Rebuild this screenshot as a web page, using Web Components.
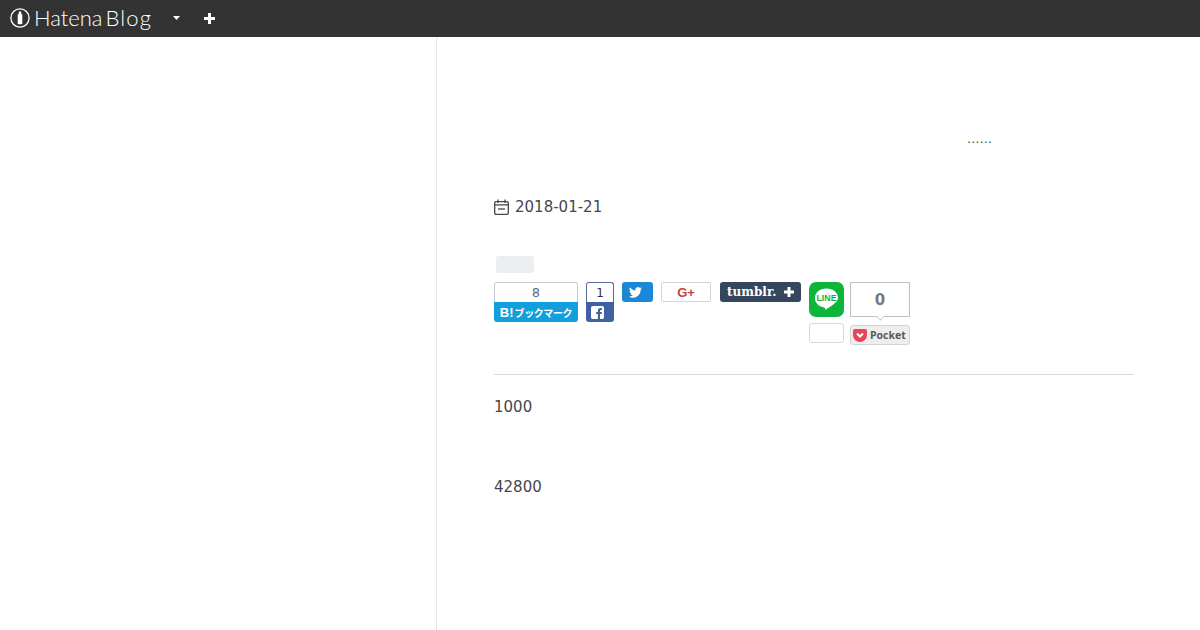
<!DOCTYPE html>
<html>
<head>
<meta charset="utf-8">
<title>Hatena Blog</title>
<style>
  html, body { margin: 0; padding: 0; background: #fff; }
  body { font-family: "DejaVu Sans", sans-serif; color: #45474c; height: 630px; overflow: hidden; }
</style>
</head>
<body>
<blog-navbar></blog-navbar>
<blog-layout>
  <blog-dots></blog-dots>
  <blog-date date="2018-01-21"></blog-date>
  <blog-tag></blog-tag>
  <share-bar></share-bar>
  <blog-para top="20">1000</blog-para>
  <blog-para top="55">42800</blog-para>
</blog-layout>

<script>
class BlogNavbar extends HTMLElement {
    constructor() {
        super();
        this.attachShadow({ mode: 'open' });
        this.shadowRoot.innerHTML = `
            <style>
                :host {
                    display: flex;
                    align-items: center;
                    box-sizing: border-box;
                    height: 37px;
                    padding: 0 0 1px 10px;
                    background: #333;
                    color: #fff;
                }
                svg { display: block; flex: none; }
                .logo-text {
                    font-family: "Lato", sans-serif;
                    font-weight: 300;
                    font-size: 22px;
                    line-height: 24px;
                    margin-left: 4px;
                    width: 118px;
                    word-spacing: -3px;
                    white-space: nowrap;
                }
                .logo-text span { letter-spacing: 1.2px; }
                .caret { margin-left: 21px; }
                .plus { margin-left: 24px; }
            </style>
            <svg width="20" height="20" viewBox="0 0 20 20">
                <circle cx="10" cy="10" r="9.1" fill="none" stroke="#fff" stroke-width="1.3"/>
                <path d="M8.900 3.600h2.200v1.600l1.200 1.600v8.600a.8.8 0 0 1-.8.8H8.500a.8.8 0 0 1-.8-.8V6.800l1.200-1.600z" fill="#fff"/>
            </svg>
            <div class="logo-text">Hatena <span>Blog</span></div>
            <svg class="caret" width="7" height="4" viewBox="0 0 7 4"><path d="M0 0h7L3.500 4z" fill="#fff"/></svg>
            <svg class="plus" width="11" height="11" viewBox="0 0 11 11"><path d="M4 0h3v4h4v3H7v4H4V7H0V4h4z" fill="#fff"/></svg>
        `;
    }
}

class BlogLayout extends HTMLElement {
    constructor() {
        super();
        this.attachShadow({ mode: 'open' });
        this.shadowRoot.innerHTML = `
            <style>
                :host {
                    display: grid;
                    grid-template-columns: 437px 1fr;
                    height: 593px;
                }
                .side { border-right: 1px solid #e5e5e5; }
                .main { padding: 0 66px 0 57px; }
            </style>
            <div class="side"></div>
            <div class="main"><slot></slot></div>
        `;
    }
}

class BlogDots extends HTMLElement {
    constructor() {
        super();
        this.attachShadow({ mode: 'open' });
        this.shadowRoot.innerHTML = `
            <style>
                :host {
                    display: block;
                    padding: 93px 0 0 473px;
                    font-size: 12.5px;
                    line-height: 17px;
                }
            </style>
            ……
        `;
    }
}

class BlogDate extends HTMLElement {
    constructor() {
        super();
        this.attachShadow({ mode: 'open' });
        this.shadowRoot.innerHTML = `
            <style>
                :host {
                    display: flex;
                    align-items: center;
                    gap: 6px;
                    margin-top: 49px;
                    height: 22px;
                    font-size: 15px;
                }
            </style>
            <svg width="15" height="16" viewBox="0 0 15 16" fill="none" stroke="#45474c" stroke-width="1.300">
                <rect x="0.700" y="2.700" width="13.600" height="12.600" rx="1.200"/>
                <path d="M4 0.500v3.500M11 0.500v3.500M0.700 5.800h13.600"/>
                <path d="M4 10h7"/>
            </svg>
            <span>${this.getAttribute('date')}</span>
        `;
    }
}

class BlogTag extends HTMLElement {
    constructor() {
        super();
        this.attachShadow({ mode: 'open' });
        this.shadowRoot.innerHTML = `
            <style>
                :host {
                    display: block;
                    width: 38px;
                    height: 17px;
                    margin: 38px 0 9px 2px;
                    background: #eceef1;
                    border-radius: 3px;
                }
            </style>
        `;
    }
}

class ShareBar extends HTMLElement {
    constructor() {
        super();
        this.attachShadow({ mode: 'open' });
        this.shadowRoot.innerHTML = `
            <style>
                :host {
                    display: flex;
                    align-items: flex-start;
                    height: 93px;
                    box-sizing: border-box;
                    border-bottom: 1px solid #d8d8d8;
                    font-family: "Liberation Sans", sans-serif;
                }
                .count {
                    box-sizing: border-box;
                    border: 1px solid #c5ccd3;
                    border-bottom: 0;
                    background: #fff;
                    border-radius: 3px 3px 0 0;
                    height: 20px;
                    display: flex;
                    align-items: center;
                    justify-content: center;
                    font-family: "DejaVu Sans", sans-serif;
                    font-size: 13px;
                }
                .hatena { width: 84px; margin-right: 8px; }
                .hatena .count { color: #5a6c7e; }
                .hatena .label {
                    height: 20px;
                    background: #139fdb;
                    color: #fff;
                    border-radius: 0 0 3px 3px;
                    font: bold 10px "Noto Sans CJK JP", sans-serif;
                    letter-spacing: -0.4px;
                    display: flex;
                    align-items: center;
                    justify-content: center;
                    white-space: nowrap;
                }
                .hatena b { font: bold 13px "Liberation Sans", sans-serif; letter-spacing: 0; margin-right: 1px; }
                .fb { width: 28px; margin-right: 8px; }
                .fb .count { border-color: #5a6b94; color: #333; font-size: 12px; }
                .fb .label {
                    height: 20px;
                    box-sizing: border-box;
                    padding-left: 5px;
                    background: #4060a5;
                    border-radius: 0 0 3px 3px;
                    display: flex;
                    align-items: center;
                }
                .tw {
                    box-sizing: border-box;
                    width: 31px;
                    height: 20px;
                    padding-left: 7px;
                    background: #1b87d6;
                    border-radius: 3px;
                    margin-right: 8px;
                    display: flex;
                    align-items: center;
                }
                .gp {
                    box-sizing: border-box;
                    width: 50px;
                    height: 20px;
                    border: 1px solid #d5d5d5;
                    border-radius: 2px;
                    background: #fff;
                    margin-right: 9px;
                    color: #c5453a;
                    font: bold 13px "Liberation Sans", sans-serif;
                    display: flex;
                    align-items: center;
                    justify-content: center;
                }
                .tb {
                    width: 81px;
                    height: 20px;
                    background: #36465d;
                    border-radius: 3px;
                    margin-right: 8px;
                    color: #fff;
                    font: bold 12px "DejaVu Serif", serif;
                    display: flex;
                    align-items: center;
                    justify-content: space-between;
                    padding: 0 7px;
                    box-sizing: border-box;
                }
                .line { width: 35px; margin-right: 6px; }
                .line .icon {
                    width: 35px;
                    height: 35px;
                    background: #0db63a;
                    border-radius: 7px;
                    display: flex;
                    align-items: center;
                    justify-content: center;
                }
                .line .box {
                    box-sizing: border-box;
                    width: 35px;
                    height: 20px;
                    margin-top: 6px;
                    border: 1px solid #d8d8d8;
                    border-radius: 3px;
                    background: #fff;
                }
                .pocket { width: 60px; }
                .pocket .num {
                    position: relative;
                    box-sizing: border-box;
                    height: 35px;
                    border: 1px solid #c0c0c0;
                    background: #fff;
                    color: #77797c;
                    font: bold 15px "DejaVu Sans", sans-serif;
                    display: flex;
                    align-items: center;
                    justify-content: center;
                }
                .pocket .num::after {
                    content: '';
                    position: absolute;
                    left: 26px;
                    bottom: -4px;
                    width: 6px;
                    height: 6px;
                    background: #fff;
                    border-right: 1px solid #c0c0c0;
                    border-bottom: 1px solid #c0c0c0;
                    transform: rotate(45deg) scale(.8);
                }
                .pocket .btn {
                    box-sizing: border-box;
                    height: 20px;
                    margin-top: 8px;
                    border: 1px solid #d4d4d4;
                    border-radius: 3px;
                    background: #eee;
                    color: #55585c;
                    font: bold 10.5px/16px "Open Sans", sans-serif;
                    display: flex;
                    align-items: center;
                    gap: 3px;
                    padding: 0 0 1px 2px;
                    white-space: nowrap;
                }
            </style>
            <div class="hatena">
                <div class="count">8</div>
                <div class="label"><b>B!</b>ブックマーク</div>
            </div>
            <div class="fb">
                <div class="count">1</div>
                <div class="label">
                    <svg width="13" height="13" viewBox="0 0 14 14"><path fill="#fff" fill-rule="evenodd" d="M2 0h10a2 2 0 0 1 2 2v10a2 2 0 0 1-2 2H9.700V8.600h1.800l.3-2.100H9.700V5.200c0-.6.200-1 1-1h1.100V2.300c-.2 0-.9-.1-1.600-.1-1.700 0-2.800 1-2.800 2.800v1.500H5.600v2.100h1.800V14H2a2 2 0 0 1-2-2V2a2 2 0 0 1 2-2z"/></svg>
                </div>
            </div>
            <div class="tw">
                <svg width="13" height="11" viewBox="0 0 24 20"><path fill="#fff" d="M24 2.400a9.800 9.800 0 0 1-2.800.8A4.900 4.900 0 0 0 23.300.5a9.800 9.800 0 0 1-3.100 1.200 4.900 4.900 0 0 0-8.400 4.500A14 14 0 0 1 1.700.9a4.900 4.900 0 0 0 1.500 6.600 4.900 4.900 0 0 1-2.200-.6v.1a4.900 4.900 0 0 0 3.900 4.800 4.900 4.900 0 0 1-2.200.1 4.900 4.900 0 0 0 4.600 3.400A9.900 9.900 0 0 1 0 17.300 14 14 0 0 0 7.500 19.500c9.100 0 14-7.500 14-14v-.6A10 10 0 0 0 24 2.400z"/></svg>
            </div>
            <div class="gp">G+</div>
            <div class="tb">
                <span>tumblr.</span>
                <svg width="10" height="10" viewBox="0 0 10 10"><path d="M3.500 0h3v3.500H10v3H6.500V10h-3V6.500H0v-3h3.500z" fill="#fff"/></svg>
            </div>
            <div class="line">
                <div class="icon">
                    <svg width="25" height="25" viewBox="0 0 27 27">
                        <path fill="#fff" d="M13.500 1.500C6.300 1.500 1 6 1 12c0 5.300 4.200 9.400 10.500 10.300.6.100.6.500.5 1-.1.600-.3 1.500.5 1.200 1.400-.6 6.500-3.800 9.200-6.300 2.200-2 4.300-3.700 4.300-6.200 0-6-5.300-10.500-12.500-10.500z"/>
                        <text x="13.500" y="15.500" text-anchor="middle" font-family="Liberation Sans" font-weight="bold" font-size="9.500" fill="#0db63a">LINE</text>
                    </svg>
                </div>
                <div class="box"></div>
            </div>
            <div class="pocket">
                <div class="num">0</div>
                <div class="btn">
                    <svg width="14" height="14" viewBox="0 0 14 14"><path fill="#e8455a" d="M2 1h10a2 2 0 0 1 2 2v4a7 7 0 0 1-14 0V3a2 2 0 0 1 2-2z"/><path d="M4 5.500 7 8.500l3-3" fill="none" stroke="#fff" stroke-width="2"/></svg>
                    <span>Pocket</span>
                </div>
            </div>
        `;
    }
}

class BlogPara extends HTMLElement {
    constructor() {
        super();
        this.attachShadow({ mode: 'open' });
        this.shadowRoot.innerHTML = `
            <style>
                :host {
                    display: block;
                    font-size: 15px;
                    line-height: 25px;
                    margin-top: ${this.getAttribute('top') || 0}px;
                }
            </style>
            <slot></slot>
        `;
    }
}

customElements.define('blog-navbar', BlogNavbar);
customElements.define('blog-layout', BlogLayout);
customElements.define('blog-dots', BlogDots);
customElements.define('blog-date', BlogDate);
customElements.define('blog-tag', BlogTag);
customElements.define('share-bar', ShareBar);
customElements.define('blog-para', BlogPara);
</script>
</body>
</html>
